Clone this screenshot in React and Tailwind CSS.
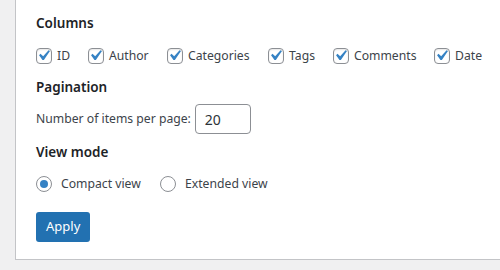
import React, { useState } from 'react';

const columns = [
  { name: 'ID', width: 'w-[52px]' },
  { name: 'Author', width: 'w-[79px]' },
  { name: 'Categories', width: 'w-[101px]' },
  { name: 'Tags', width: 'w-[65px]' },
  { name: 'Comments', width: 'w-[101px]' },
  { name: 'Date', width: 'w-[60px]' },
];

const Checkbox = ({ checked, onChange }) => (
  <span
    onClick={onChange}
    className="relative flex h-4 w-4 shrink-0 rounded-[4px] border border-[#8c8f94] bg-white shadow-[inset_0_1px_2px_rgba(0,0,0,0.1)]"
  >
    {checked && (
      <svg viewBox="0 0 20 20" className="absolute -left-[4px] -top-[4px] h-[21px] w-[21px]">
        <path d="M14.83 4.89l1.34.94-5.81 8.38H9.02L5.78 9.67l1.34-1.25 2.57 2.4z" fill="#3582c4" />
      </svg>
    )}
  </span>
);

const Radio = ({ checked, onChange }) => (
  <span
    onClick={onChange}
    className="flex h-4 w-4 shrink-0 items-center justify-center rounded-full border border-[#8c8f94] bg-white"
  >
    {checked && <span className="h-2 w-2 rounded-full bg-[#3582c4]" />}
  </span>
);

const App = () => {
  const [visible, setVisible] = useState(columns.map(c => c.name));
  const [perPage, setPerPage] = useState('20');
  const [mode, setMode] = useState('compact');

  const toggle = (col) => {
    setVisible(visible.includes(col) ? visible.filter(c => c !== col) : [...visible, col]);
  };

  return (
    <div className="h-[270px] w-[500px] bg-[#f0f0f1] pl-[15px] font-['Noto_Sans',sans-serif] text-[12.2px] text-[#3c434a]">
      <div className="h-[260px] border-b border-l border-[#c3c4c7] bg-white pl-5 pt-[12px]">
        <h3 className="text-[13.5px] font-semibold leading-[22px] text-[#1d2327]">Columns</h3>
        <div className="mt-[13px] flex items-center">
          {columns.map(col => (
            <label key={col.name} className={`flex items-center gap-[5px] ${col.width}`}>
              <Checkbox checked={visible.includes(col.name)} onChange={() => toggle(col.name)} />
              <span>{col.name}</span>
            </label>
          ))}
        </div>

        <h3 className="mt-[11px] text-[13.5px] font-semibold leading-[22px] text-[#1d2327]">Pagination</h3>
        <div className="mt-[6px] flex items-center gap-[4px]">
          <span>Number of items per page:</span>
          <input
            value={perPage}
            onChange={e => setPerPage(e.target.value)}
            className="h-[30px] w-[56px] rounded-[4px] border border-[#8c8f94] px-[9px] text-[14px] text-[#2c3338] outline-none"
          />
        </div>

        <h3 className="mt-[7px] text-[13.5px] font-semibold leading-[22px] text-[#1d2327]">View mode</h3>
        <div className="mt-[12px] flex items-center">
          <label className="flex w-[124px] items-center gap-[9px]" onClick={() => setMode('compact')}>
            <Radio checked={mode === 'compact'} />
            <span>Compact view</span>
          </label>
          <label className="flex items-center gap-[9px]" onClick={() => setMode('extended')}>
            <Radio checked={mode === 'extended'} />
            <span>Extended view</span>
          </label>
        </div>

        <button className="mt-[18px] h-[30px] rounded-[3px] bg-[#2271b1] px-[10px] text-[13px] text-white">
          Apply
        </button>
      </div>
    </div>
  );
};

export default App;
